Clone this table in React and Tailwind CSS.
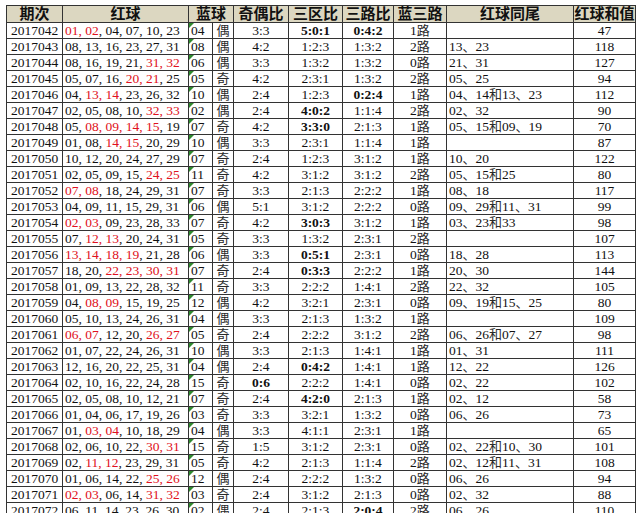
import React from "react";

const rows = [
  ["2017042", "01,02,04,07,10,23", ["01", "02"], "04", "偶", "3:3", "5:0:1", "0:4:2", "1路", "", "47"],
  ["2017043", "08,13,16,23,27,31", [], "08", "偶", "4:2", "1:2:3", "1:3:2", "2路", "13、23", "118"],
  ["2017044", "08,16,19,21,31,32", ["31", "32"], "06", "偶", "3:3", "1:3:2", "1:3:2", "0路", "21、31", "127"],
  ["2017045", "05,07,16,20,21,25", ["20", "21"], "05", "奇", "4:2", "2:3:1", "1:3:2", "2路", "05、25", "94"],
  ["2017046", "04,13,14,23,26,32", ["13", "14"], "10", "偶", "2:4", "1:2:3", "0:2:4", "1路", "04、14和13、23", "112"],
  ["2017047", "02,05,08,10,32,33", ["32", "33"], "02", "偶", "2:4", "4:0:2", "1:1:4", "2路", "02、32", "90"],
  ["2017048", "05,08,09,14,15,19", ["08", "09", "14", "15"], "07", "奇", "4:2", "3:3:0", "2:1:3", "1路", "05、15和09、19", "70"],
  ["2017049", "01,08,14,15,20,29", ["14", "15"], "10", "偶", "3:3", "2:3:1", "1:1:4", "1路", "", "87"],
  ["2017050", "10,12,20,24,27,29", [], "07", "奇", "2:4", "1:2:3", "3:1:2", "1路", "10、20", "122"],
  ["2017051", "02,05,09,15,24,25", ["24", "25"], "11", "奇", "4:2", "3:1:2", "3:1:2", "2路", "05、15和25", "80"],
  ["2017052", "07,08,18,24,29,31", ["07", "08"], "07", "奇", "3:3", "2:1:3", "2:2:2", "1路", "08、18", "117"],
  ["2017053", "04,09,11,15,29,31", [], "06", "偶", "5:1", "3:1:2", "2:2:2", "0路", "09、29和11、31", "99"],
  ["2017054", "02,03,09,23,28,33", ["02", "03"], "07", "奇", "4:2", "3:0:3", "3:1:2", "1路", "03、23和33", "98"],
  ["2017055", "07,12,13,20,24,31", ["12", "13"], "05", "奇", "3:3", "1:3:2", "2:3:1", "2路", "", "107"],
  ["2017056", "13,14,18,19,21,28", ["13", "14", "18", "19"], "06", "偶", "3:3", "0:5:1", "2:3:1", "0路", "18、28", "113"],
  ["2017057", "18,20,22,23,30,31", ["22", "23", "30", "31"], "07", "奇", "2:4", "0:3:3", "2:2:2", "1路", "20、30", "144"],
  ["2017058", "01,09,13,22,28,32", [], "11", "奇", "3:3", "2:2:2", "1:4:1", "2路", "22、32", "105"],
  ["2017059", "04,08,09,15,19,25", ["08", "09"], "12", "偶", "4:2", "3:2:1", "2:3:1", "0路", "09、19和15、25", "80"],
  ["2017060", "05,10,13,24,26,31", [], "04", "偶", "3:3", "2:1:3", "1:3:2", "1路", "", "109"],
  ["2017061", "06,07,12,20,26,27", ["06", "07", "26", "27"], "05", "奇", "2:4", "2:2:2", "3:1:2", "2路", "06、26和07、27", "98"],
  ["2017062", "01,07,22,24,26,31", [], "10", "偶", "3:3", "2:1:3", "1:4:1", "1路", "01、31", "111"],
  ["2017063", "12,16,20,22,25,31", [], "04", "偶", "2:4", "0:4:2", "1:4:1", "1路", "12、22", "126"],
  ["2017064", "02,10,16,22,24,28", [], "15", "奇", "0:6", "2:2:2", "1:4:1", "0路", "02、22", "102"],
  ["2017065", "02,05,08,10,12,21", [], "07", "奇", "2:4", "4:2:0", "2:1:3", "1路", "02、12", "58"],
  ["2017066", "01,04,06,17,19,26", [], "03", "奇", "3:3", "3:2:1", "1:3:2", "0路", "06、26", "73"],
  ["2017067", "01,03,04,10,18,29", ["03", "04"], "04", "偶", "3:3", "4:1:1", "2:3:1", "1路", "", "65"],
  ["2017068", "02,06,10,22,30,31", ["30", "31"], "15", "奇", "1:5", "3:1:2", "2:3:1", "0路", "02、22和10、30", "101"],
  ["2017069", "02,11,12,23,29,31", ["11", "12"], "05", "奇", "4:2", "2:1:3", "1:1:4", "2路", "02、12和11、31", "108"],
  ["2017070", "01,06,14,22,25,26", ["25", "26"], "12", "偶", "2:4", "2:2:2", "1:3:2", "0路", "06、26", "94"],
  ["2017071", "02,03,06,14,31,32", ["02", "03", "31", "32"], "03", "奇", "2:4", "3:1:2", "2:1:3", "0路", "02、32", "88"],
  ["2017072", "06,11,14,23,26,30", [], "02", "偶", "2:4", "2:1:3", "2:0:4", "2路", "06、26", "110"],
];

const cell = "border border-[#333] h-[16px] leading-[15px] p-0 whitespace-nowrap overflow-hidden";
const head = "border border-[#333] h-[17px] leading-[16px] p-0 font-bold text-[15px] text-center";

// CJK glyphs fall back to Noto Sans CJK, a touch smaller keeps them in line with the serif digits
function Mixed({ text }) {
  return text.split(/([\u3000-\u9fff]+)/).map((part, i) =>
    /[\u3000-\u9fff]/.test(part) ? (
      <span key={i} className="text-[13px] leading-none text-[#2a2a2a]">
        {part}
      </span>
    ) : (
      part
    )
  );
}

function Ratio({ v }) {
  return <span className={v.includes("0") ? "font-bold" : ""}>{v}</span>;
}

function Reds({ list, red }) {
  const nums = list.split(",");
  return nums.map((n, i) => {
    const isRed = red.includes(n);
    const nextRed = i < nums.length - 1 && red.includes(nums[i + 1]);
    return (
      <React.Fragment key={i}>
        <span className={isRed ? "text-[#e01020]" : ""}>{n}</span>
        {i < nums.length - 1 && (
          <span className={isRed && nextRed ? "text-[#e01020]" : ""}>, </span>
        )}
      </React.Fragment>
    );
  });
}

export default function App() {
  return (
    <div className="bg-white w-[640px] pt-[5px] pl-[6px]">
      <table
        className="table-fixed border-collapse text-[13.5px] text-[#111]"
        style={{ fontFamily: '"Liberation Serif", "Noto Sans CJK SC", serif' }}
      >
        <colgroup>
          <col className="w-[56px]" />
          <col className="w-[126px]" />
          <col className="w-[24px]" />
          <col className="w-[21px]" />
          <col className="w-[55px]" />
          <col className="w-[54px]" />
          <col className="w-[51px]" />
          <col className="w-[53px]" />
          <col className="w-[127px]" />
          <col className="w-[62px]" />
        </colgroup>
        <thead>
          <tr className="bg-[#dcd7c1]">
            <th className={head}>期次</th>
            <th className={head}>红球</th>
            <th className={head} colSpan={2}>蓝球</th>
            <th className={head}>奇偶比</th>
            <th className={head}>三区比</th>
            <th className={head}>三路比</th>
            <th className={head}>蓝三路</th>
            <th className={head}>红球同尾</th>
            <th className={head}>红球和值</th>
          </tr>
        </thead>
        <tbody>
          {rows.map((r) => (
            <tr key={r[0]}>
              <td className={cell + " text-center"}>{r[0]}</td>
              <td className={cell + " pl-[2px]"}>
                <Reds list={r[1]} red={r[2]} />
              </td>
              <td className={cell + " relative pl-[2px]"}>
                <span className="absolute left-0 top-0 w-0 h-0 border-t-[5px] border-r-[5px] border-t-[#2f8a2f] border-r-transparent" />
                {r[3]}
              </td>
              <td className={cell + " text-center"}>
                <Mixed text={r[4]} />
              </td>
              <td className={cell + " text-center"}>
                <Ratio v={r[5]} />
              </td>
              <td className={cell + " text-center"}>
                <Ratio v={r[6]} />
              </td>
              <td className={cell + " text-center"}>
                <Ratio v={r[7]} />
              </td>
              <td className={cell + " text-center"}>
                <Mixed text={r[8]} />
              </td>
              <td className={cell + " pl-[2px]"}>
                <Mixed text={r[9]} />
              </td>
              <td className={cell + " text-center"}>{r[10]}</td>
            </tr>
          ))}
        </tbody>
      </table>
    </div>
  );
}
